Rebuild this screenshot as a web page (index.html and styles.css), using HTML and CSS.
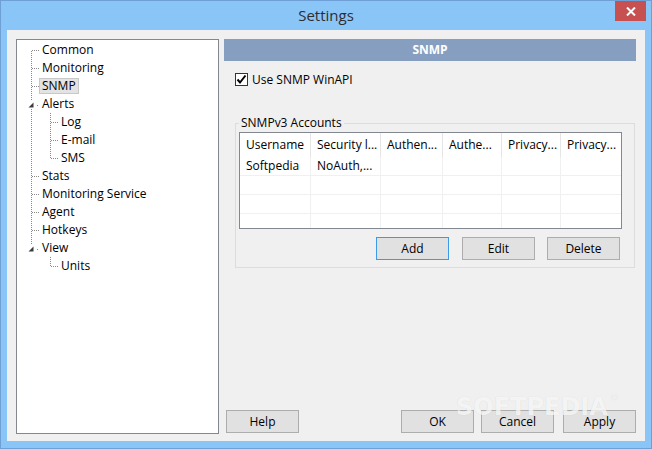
FILE: index.html
```html
<!DOCTYPE html>
<html>
<head>
<meta charset="utf-8">
<title>Settings</title>
<link rel="stylesheet" href="styles.css">
</head>
<body>
<div class="window">
  <div class="titlebar">
    <div class="title">Settings</div>
    <div class="close">
      <svg width="10" height="9" viewBox="0 0 10 9"><path d="M1 0.5 L9 8.5 M9 0.5 L1 8.5" stroke="#fff" stroke-width="2"/></svg>
    </div>
  </div>
  <div class="client">
    <div class="tree">
      <div class="node">
        <svg class="g0" viewBox="0 0 22 18"><path class="ln" d="M14.5 10 V18 M15 9.5 H22"/></svg>
        <span class="lbl">Common</span>
      </div>
      <div class="node">
        <svg class="g0" viewBox="0 0 22 18"><path class="ln" d="M14.5 0 V18 M15 9.5 H22"/></svg>
        <span class="lbl">Monitoring</span>
      </div>
      <div class="node">
        <svg class="g0" viewBox="0 0 22 18"><path class="ln" d="M14.5 0 V18 M15 9.5 H22"/></svg>
        <span class="lbl sel">SNMP</span>
      </div>
      <div class="node">
        <svg class="g0" viewBox="0 0 22 18"><path class="ln" d="M14.5 0 V6 M14.5 14 V18"/><path class="tri" d="M16.5 7.5 V12.5 H11.5 Z"/><rect class="dot" x="20" y="10" width="1" height="1"/></svg>
        <span class="lbl">Alerts</span>
      </div>
      <div class="node">
        <svg class="g0" viewBox="0 0 22 18"><path class="ln" d="M14.5 0 V18"/></svg>
        <svg class="g1" viewBox="0 0 19 18"><path class="ln" d="M11.5 0 V18 M12 9.5 H19"/></svg>
        <span class="lbl">Log</span>
      </div>
      <div class="node">
        <svg class="g0" viewBox="0 0 22 18"><path class="ln" d="M14.5 0 V18"/></svg>
        <svg class="g1" viewBox="0 0 19 18"><path class="ln" d="M11.5 0 V18 M12 9.5 H19"/></svg>
        <span class="lbl">E-mail</span>
      </div>
      <div class="node">
        <svg class="g0" viewBox="0 0 22 18"><path class="ln" d="M14.5 0 V18"/></svg>
        <svg class="g1" viewBox="0 0 19 18"><path class="ln" d="M11.5 0 V10 M12 9.5 H19"/></svg>
        <span class="lbl">SMS</span>
      </div>
      <div class="node">
        <svg class="g0" viewBox="0 0 22 18"><path class="ln" d="M14.5 0 V18 M15 9.5 H22"/></svg>
        <span class="lbl">Stats</span>
      </div>
      <div class="node">
        <svg class="g0" viewBox="0 0 22 18"><path class="ln" d="M14.5 0 V18 M15 9.5 H22"/></svg>
        <span class="lbl">Monitoring Service</span>
      </div>
      <div class="node">
        <svg class="g0" viewBox="0 0 22 18"><path class="ln" d="M14.5 0 V18 M15 9.5 H22"/></svg>
        <span class="lbl">Agent</span>
      </div>
      <div class="node">
        <svg class="g0" viewBox="0 0 22 18"><path class="ln" d="M14.5 0 V18 M15 9.5 H22"/></svg>
        <span class="lbl">Hotkeys</span>
      </div>
      <div class="node">
        <svg class="g0" viewBox="0 0 22 18"><path class="ln" d="M14.5 0 V6"/><path class="tri" d="M16.5 7.5 V12.5 H11.5 Z"/><rect class="dot" x="20" y="10" width="1" height="1"/></svg>
        <span class="lbl">View</span>
      </div>
      <div class="node">
        <svg class="g0" viewBox="0 0 22 18"></svg>
        <svg class="g1" viewBox="0 0 19 18"><path class="ln" d="M11.5 0 V10 M12 9.5 H19"/></svg>
        <span class="lbl">Units</span>
      </div>
    </div>

    <div class="pane">
      <div class="pane-header">SNMP</div>
      <label class="check">
        <span class="box"><svg width="11" height="11" viewBox="0 0 11 11"><path d="M1.5 5.5 L4 8.5 L9.5 1.5" fill="none" stroke="#000" stroke-width="2"/></svg></span>
        <span>Use SNMP WinAPI</span>
      </label>

      <fieldset class="group">
        <legend>SNMPv3 Accounts</legend>
        <div class="list">
          <div class="lv-row lv-head">
            <div class="c">Username</div>
            <div class="c">Security l...</div>
            <div class="c">Authen...</div>
            <div class="c">Authe...</div>
            <div class="c">Privacy...</div>
            <div class="c">Privacy...</div>
          </div>
          <div class="lv-row">
            <div class="c">Softpedia</div>
            <div class="c">NoAuth,...</div>
            <div class="c"></div><div class="c"></div><div class="c"></div><div class="c"></div>
          </div>
          <div class="lv-row">
            <div class="c"></div><div class="c"></div><div class="c"></div><div class="c"></div><div class="c"></div><div class="c"></div>
          </div>
          <div class="lv-row">
            <div class="c"></div><div class="c"></div><div class="c"></div><div class="c"></div><div class="c"></div><div class="c"></div>
          </div>
          <div class="lv-row">
            <div class="c"></div><div class="c"></div><div class="c"></div><div class="c"></div><div class="c"></div><div class="c"></div>
          </div>
        </div>
        <div class="group-buttons">
          <button class="btn default">Add</button>
          <button class="btn">Edit</button>
          <button class="btn">Delete</button>
        </div>
      </fieldset>

      <div class="footer">
        <button class="btn help">Help</button>
        <button class="btn ok">OK</button>
        <button class="btn cancel">Cancel</button>
        <button class="btn apply">Apply</button>
      </div>
    </div>
  </div>
  <div class="watermark">SOFTPEDIA<span class="reg">®</span></div>
</div>
</body>
</html>
```

FILE: styles.css
```css
* { box-sizing: border-box; }

html, body {
  margin: 0;
  padding: 0;
  background: #8ac5f8;
}

body {
  font-family: "Open Sans", "Noto Sans", "DejaVu Sans", sans-serif;
  font-size: 12px;
  color: #000;
}

.window {
  position: relative;
  width: 652px;
  height: 449px;
  background: #8ac5f8;
  border: 1px solid #6e9fd5;
  display: flex;
  flex-direction: column;
  overflow: hidden;
}

.titlebar {
  height: 29px;
  display: grid;
  grid-template-columns: 1fr auto 1fr;
  align-items: start;
}

.title {
  grid-column: 2;
  font-size: 15px;
  line-height: 29px;
  color: #2d2d30;
  padding-left: 0;
}

.close {
  grid-column: 3;
  justify-self: end;
  margin-right: 5px;
  width: 31px;
  height: 20px;
  background: #c75050;
  display: flex;
  align-items: center;
  justify-content: center;
}

.close svg { display: block; }

.client {
  margin: 0 6px 0 6px;
  height: 411px;
  background: #f0f0f0;
  display: flex;
  align-items: stretch;
  padding: 9px 9px 7px 9px;
  gap: 5px;
}

/* Tree */
.tree {
  width: 203px;
  flex: none;
  background: #fff;
  border: 1px solid #828790;
  padding-top: 1px;
}

.node {
  height: 18px;
  display: flex;
  align-items: center;
  white-space: nowrap;
}

.g0 { width: 22px; height: 18px; flex: none; display: block; }
.g1 { width: 19px; height: 18px; flex: none; display: block; }

.ln {
  fill: none;
  stroke: #8a8a8a;
  stroke-width: 1;
  stroke-dasharray: 1 1;
  shape-rendering: crispEdges;
}

.tri { fill: #3c3c3c; }
.dot { fill: #8a8a8a; }

.lbl {
  display: inline-block;
  height: 16px;
  line-height: 14px;
  padding: 0 2px;
  border: 1px solid transparent;
}

.lbl.sel {
  background: #e3e3e3;
  border-color: #c8c8c8;
}

/* Right pane */
.pane {
  flex: 1;
  display: flex;
  flex-direction: column;
}

.pane-header {
  height: 22px;
  line-height: 22px;
  background: #869fc1;
  color: #fff;
  font-weight: bold;
  text-align: center;
}

.check {
  display: flex;
  align-items: center;
  height: 13px;
  margin: 12px 0 0 11px;
  gap: 4px;
}

.box {
  width: 13px;
  height: 13px;
  border: 1px solid #333;
  background: #fff;
  display: flex;
  align-items: center;
  justify-content: center;
}

.box svg { display: block; }

.group {
  margin: 29px 1px 0 11px;
  padding: 1px 12px 7px 3px;
  border: 1px solid #dcdcdc;
  min-width: 0;
}

.group legend {
  padding: 0 2px;
  line-height: 16px;
  height: 16px;
}

.list {
  width: 383px;
  height: 97px;
  border: 1px solid #828790;
  background: #fff;
  overflow: hidden;
}

.lv-row {
  display: grid;
  grid-template-columns: 71px 70px 62px 59px 59px 1fr;
  height: 19px;
  border-bottom: 1px solid #f0f0f0;
}

.lv-row .c {
  border-right: 1px solid #f0f0f0;
  padding-left: 6px;
  line-height: 18px;
  white-space: nowrap;
  overflow: hidden;
}

.lv-row .c:last-child { border-right: none; }

.lv-head {
  height: 24px;
  border-bottom: none;
}

.lv-head .c {
  border-right: 1px solid #e5e5e5;
  line-height: 24px;
}

.group-buttons {
  display: flex;
  justify-content: flex-end;
  margin-top: 8px;
  padding-right: 2px;
  gap: 12px;
}

.btn {
  width: 73px;
  height: 23px;
  background: #e1e1e1;
  border: 1px solid #adadad;
  font-family: inherit;
  font-size: 12px;
  color: #000;
  padding: 0;
  margin: 0;
  line-height: 20px;
}

.btn.default {
  border-color: #3c9ae8;
  margin-right: 1px;
}

.footer {
  margin-top: auto;
  margin-bottom: 1px;
  display: flex;
  align-items: center;
}

.help { margin-left: 2px; }
.ok { margin-left: auto; }
.cancel { margin-left: 7px; }
.apply { margin-left: 9px; }

.watermark {
  position: absolute;
  left: 455px;
  top: 392px;
  font-family: "DejaVu Sans", sans-serif;
  font-weight: bold;
  font-size: 24px;
  letter-spacing: 0px;
  color: rgba(255, 255, 255, 0.75);
  text-shadow: 0 0 1px rgba(0, 0, 0, 0.12);
  pointer-events: none;
}

.watermark .reg {
  font-size: 9px;
  vertical-align: top;
  margin-left: 2px;
}
```
